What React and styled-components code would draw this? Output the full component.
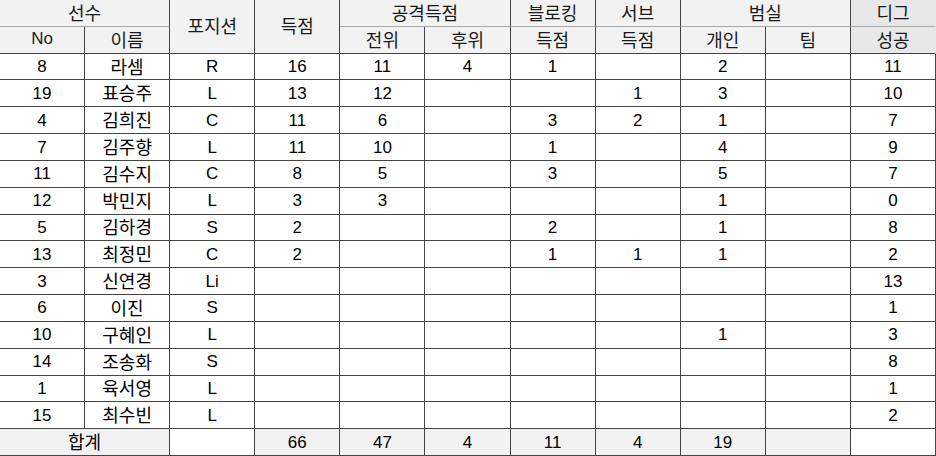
import React from "react";
import styled, { createGlobalStyle } from "styled-components";

const Global = createGlobalStyle`
  html, body { margin: 0; padding: 0; background: #fff; }
  body { font-family: "Liberation Sans", Arial, "Noto Sans CJK KR", sans-serif; }
`;

const Grid = styled.div`
  display: grid;
  grid-template-columns: repeat(11, 1fr);
  grid-template-rows: repeat(17, 1fr);
  width: 936px;
  height: 456px;
  box-sizing: border-box;
  color: #000;
`;

const Cell = styled.div`
  display: flex;
  align-items: center;
  justify-content: center;
  box-sizing: border-box;
  line-height: 1;
  font-size: 17px;
  grid-column: ${(p) => p.$col || "auto"};
  grid-row: ${(p) => p.$row || "auto"};
  border-right: 1px solid ${(p) => (p.$noRight ? "transparent" : "#444")};
  border-bottom: 1px solid ${(p) => (p.$lightBottom ? "#a8a8a8" : "#444")};
  background: ${(p) => p.$bg || "#fff"};
  font-family: ${(p) =>
    p.$ko ? '"Noto Sans CJK KR", sans-serif' : '"Liberation Sans", Arial, sans-serif'};
`;

const HeadCell = styled(Cell)`
  font-family: ${(p) =>
    p.$latin ? '"Liberation Sans", Arial, sans-serif' : '"Noto Sans CJK KR", sans-serif'};
  font-size: ${(p) => (p.$latin ? "17px" : "18px")};
  color: #1a1a1a;
  padding-bottom: 2px;
`;

const KoText = styled.span`
  font-size: 18px;
  padding-bottom: 2px;
`;

const rows = [
  [8, "라셈", "R", 16, 11, 4, 1, "", 2, "", 11],
  [19, "표승주", "L", 13, 12, "", "", 1, 3, "", 10],
  [4, "김희진", "C", 11, 6, "", 3, 2, 1, "", 7],
  [7, "김주향", "L", 11, 10, "", 1, "", 4, "", 9],
  [11, "김수지", "C", 8, 5, "", 3, "", 5, "", 7],
  [12, "박민지", "L", 3, 3, "", "", "", 1, "", 0],
  [5, "김하경", "S", 2, "", "", 2, "", 1, "", 8],
  [13, "최정민", "C", 2, "", "", 1, 1, 1, "", 2],
  [3, "신연경", "Li", "", "", "", "", "", "", "", 13],
  [6, "이진", "S", "", "", "", "", "", "", "", 1],
  [10, "구혜인", "L", "", "", "", "", "", 1, "", 3],
  [14, "조송화", "S", "", "", "", "", "", "", "", 8],
  [1, "육서영", "L", "", "", "", "", "", "", "", 1],
  [15, "최수빈", "L", "", "", "", "", "", "", "", 2],
];

const totals = [66, 47, 4, 11, 4, 19, ""];

const HEAD = "#f2f2f2";
const HEAD_DARK = "#e8e8e8";

export default function App() {
  return (
    <>
      <Global />
      <Grid>
        <HeadCell $col="1 / span 2" $lightBottom $bg={HEAD}>선수</HeadCell>
        <HeadCell $col="3" $row="1 / span 2" $bg={HEAD}>포지션</HeadCell>
        <HeadCell $col="4" $row="1 / span 2" $bg={HEAD}>득점</HeadCell>
        <HeadCell $col="5 / span 2" $lightBottom $bg={HEAD}>공격득점</HeadCell>
        <HeadCell $col="7" $lightBottom $bg={HEAD}>블로킹</HeadCell>
        <HeadCell $col="8" $lightBottom $bg={HEAD}>서브</HeadCell>
        <HeadCell $col="9 / span 2" $lightBottom $bg={HEAD}>범실</HeadCell>
        <HeadCell $col="11" $lightBottom $noRight $bg={HEAD_DARK}>디그</HeadCell>

        <HeadCell $col="1" $row="2" $latin $bg={HEAD}>No</HeadCell>
        <HeadCell $col="2" $row="2" $bg={HEAD}>이름</HeadCell>
        <HeadCell $col="5" $row="2" $bg={HEAD}>전위</HeadCell>
        <HeadCell $col="6" $row="2" $bg={HEAD}>후위</HeadCell>
        <HeadCell $col="7" $row="2" $bg={HEAD}>득점</HeadCell>
        <HeadCell $col="8" $row="2" $bg={HEAD}>득점</HeadCell>
        <HeadCell $col="9" $row="2" $bg={HEAD}>개인</HeadCell>
        <HeadCell $col="10" $row="2" $bg={HEAD}>팀</HeadCell>
        <HeadCell $col="11" $row="2" $noRight $bg={HEAD_DARK}>성공</HeadCell>

        {rows.map((r, i) =>
          r.map((v, j) => (
            <Cell key={`${i}-${j}`} $ko={j === 1}>
              {j === 1 ? <KoText>{v}</KoText> : v}
            </Cell>
          ))
        )}

        <Cell $col="1 / span 2" $ko $bg={HEAD}><KoText>합계</KoText></Cell>
        <Cell />
        {totals.map((v, j) => (
          <Cell key={`t${j}`} $bg={HEAD}>{v}</Cell>
        ))}
        <Cell />
      </Grid>
    </>
  );
}
